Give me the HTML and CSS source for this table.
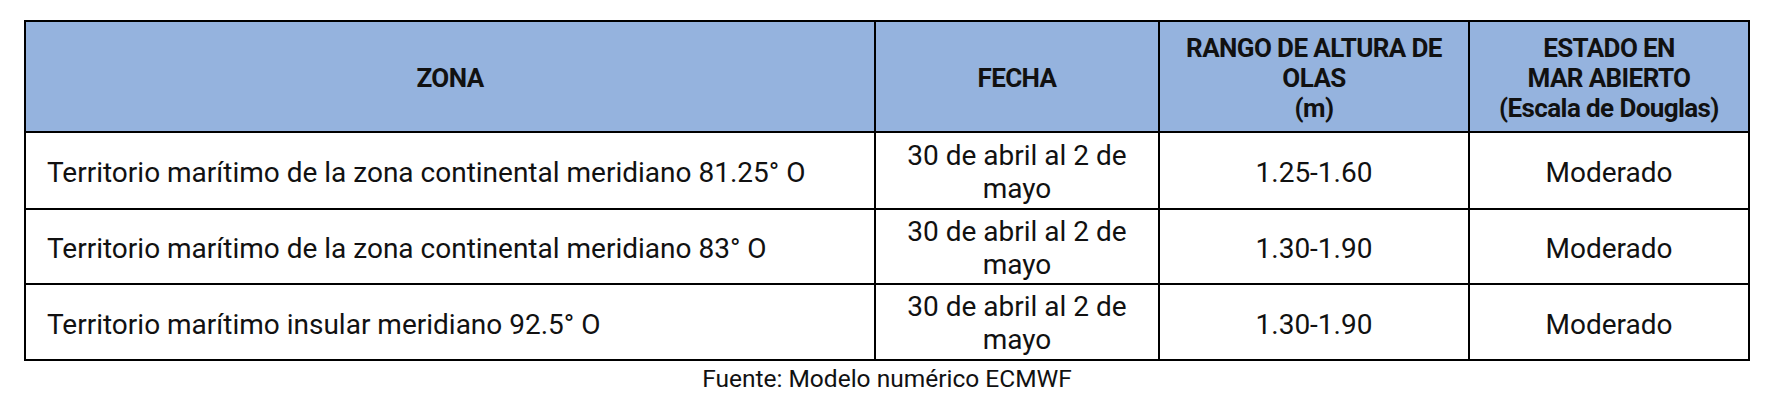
FILE: index.html
```
<!DOCTYPE html>
<html lang="es">
<head>
<meta charset="utf-8">
<title>Pronóstico de oleaje</title>
<link rel="stylesheet" href="styles.css">
</head>
<body>
<table class="forecast">
  <colgroup>
    <col class="c-zona">
    <col class="c-fecha">
    <col class="c-rango">
    <col class="c-estado">
  </colgroup>
  <thead>
    <tr class="head-row">
      <th>ZONA</th>
      <th>FECHA</th>
      <th>RANGO DE ALTURA DE<br>OLAS<br>(m)</th>
      <th>ESTADO EN<br>MAR ABIERTO<br>(Escala de Douglas)</th>
    </tr>
  </thead>
  <tbody>
    <tr class="row r1">
      <td class="zona">Territorio marítimo de la zona continental meridiano 81.25° O</td>
      <td class="date">30 de abril al 2 de<br>mayo</td>
      <td>1.25-1.60</td>
      <td>Moderado</td>
    </tr>
    <tr class="row r2">
      <td class="zona">Territorio marítimo de la zona continental meridiano 83° O</td>
      <td class="date">30 de abril al 2 de<br>mayo</td>
      <td>1.30-1.90</td>
      <td>Moderado</td>
    </tr>
    <tr class="row r3">
      <td class="zona">Territorio marítimo insular meridiano 92.5° O</td>
      <td class="date">30 de abril al 2 de<br>mayo</td>
      <td>1.30-1.90</td>
      <td>Moderado</td>
    </tr>
  </tbody>
  <caption class="source">Fuente: Modelo numérico ECMWF</caption>
</table>
</body>
</html>
```
FILE: styles.css
```
html, body {
  margin: 0;
  padding: 0;
  background: #ffffff;
}

body {
  font-family: Roboto, "Liberation Sans", sans-serif;
  color: #111111;
}

.forecast {
  margin: 20px 0 0 24px;
  width: 1726px;
  border-collapse: collapse;
  table-layout: fixed;
}

.c-zona { width: 850px; }
.c-fecha { width: 284px; }
.c-rango { width: 310px; }
.c-estado { width: 280px; }

.forecast th,
.forecast td {
  border: 2px solid #000000;
  padding: 0;
  vertical-align: middle;
  text-align: center;
}

.head-row {
  height: 111px;
  background: #95b3de;
}

.forecast th {
  font-size: 26px;
  font-weight: 700;
  letter-spacing: -0.6px;
  line-height: 30px;
  padding-top: 3px;
}

.forecast td {
  font-size: 28px;
  font-weight: 400;
  line-height: 33px;
  padding-top: 4px;
}

.forecast td.date {
  padding-top: 2px;
}

.r1 { height: 77px; }
.r2 { height: 75px; }
.r3 { height: 76px; }

.forecast td.zona {
  text-align: left;
  padding-left: 21px;
}

.source {
  caption-side: bottom;
  font-size: 24.5px;
  line-height: 28px;
  padding-top: 4px;
  text-align: center;
  color: #111111;
}
```
